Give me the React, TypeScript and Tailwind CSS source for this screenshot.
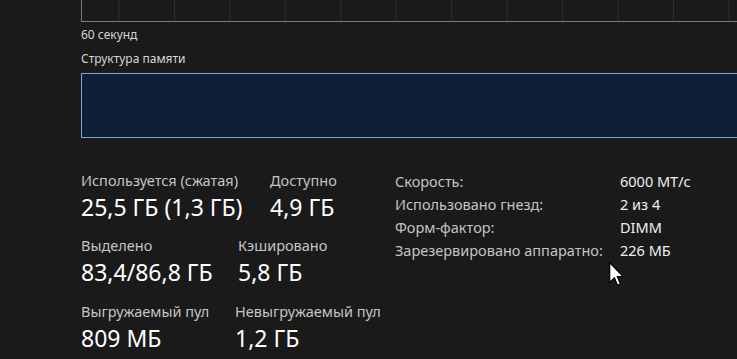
import React from "react";

const font = { fontFamily: '"Noto Sans", "Open Sans", sans-serif' };

function Stat({ label, value, w }: { label: string; value: string; w: string }) {
  return (
    <div className={`flex flex-col ${w}`}>
      <div className="text-[14.5px] leading-[20px] text-[#c4c4c4] whitespace-nowrap">{label}</div>
      <div className="mt-[2px] text-[23px] leading-[30px] text-white whitespace-nowrap">{value}</div>
    </div>
  );
}

export default function App() {
  const gridXs = Array.from({ length: 13 }, (_, k) => 37 + 55.45 * k);
  const rows: [string, string][] = [
    ["Скорость:", "6000 МТ/с"],
    ["Использовано гнезд:", "2 из 4"],
    ["Форм-фактор:", "DIMM"],
    ["Зарезервировано аппаратно:", "226 МБ"],
  ];
  return (
    <div className="relative w-[737px] h-[359px] overflow-hidden bg-[#1a1a1a]" style={font}>
      <div className="pl-[81px] flex flex-col">
        {/* chart bottom */}
        <div className="w-[700px] h-[22px] border-l border-b border-[#7a7a7a] relative">
          <svg className="absolute inset-0" width="700" height="21">
            {gridXs.map((x, i) => (
              <line key={i} x1={x} y1={0} x2={x} y2={21} stroke="#2e2e2e" strokeWidth={1} />
            ))}
          </svg>
        </div>
        <div className="mt-[5px] text-[12px] leading-[16px] text-[#d6d6d6]">60 секунд</div>
        <div className="mt-[8px] text-[12px] leading-[16px] text-[#d6d6d6]">Структура памяти</div>
        <div className="mt-[6px] w-[700px] h-[65px] border border-[#74a4e6] bg-[#0f1e37]" />

        <div className="mt-[32px] flex">
          <div className="flex flex-col w-[314px]">
            <div className="flex">
              <Stat label="Используется (сжатая)" value="25,5 ГБ (1,3 ГБ)" w="w-[189px]" />
              <Stat label="Доступно" value="4,9 ГБ" w="w-[100px]" />
            </div>
            <div className="flex mt-[13px]">
              <Stat label="Выделено" value="83,4/86,8 ГБ" w="w-[157px]" />
              <Stat label="Кэшировано" value="5,8 ГБ" w="w-[100px]" />
            </div>
            <div className="flex mt-[14px]">
              <Stat label="Выгружаемый пул" value="809 МБ" w="w-[154px]" />
              <Stat label="Невыгружаемый пул" value="1,2 ГБ" w="w-[150px]" />
            </div>
          </div>
          <div className="flex flex-col">
            {rows.map(([l, v]) => (
              <div key={l} className="flex text-[14.5px] leading-[23px]">
                <div className="w-[225px] text-[#c4c4c4] whitespace-nowrap">{l}</div>
                <div className="text-[#f0f0f0] whitespace-nowrap">{v}</div>
              </div>
            ))}
          </div>
        </div>
      </div>

      {/* mouse cursor */}
      <svg className="absolute left-[609px] top-[262px]" width="15" height="26" viewBox="0 0 12 21">
        <path
          d="M0.5 0.5 L0.5 16.5 L4.3 12.8 L6.8 18.8 L9.2 17.8 L6.7 11.9 L11.5 11.9 Z"
          fill="#ffffff"
          stroke="#000000"
          strokeWidth="1"
          strokeLinejoin="miter"
        />
      </svg>
    </div>
  );
}
